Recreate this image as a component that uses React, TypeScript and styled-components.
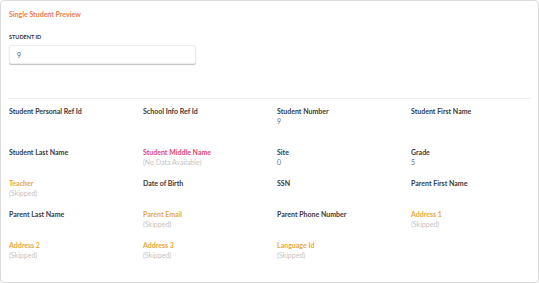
import React from 'react';
import styled, { createGlobalStyle } from 'styled-components';

type Status = 'normal' | 'missing' | 'skipped';

interface Field {
  label: string;
  value?: string;
  status?: Status;
}

const fields: Field[] = [
  { label: 'Student Personal Ref Id' },
  { label: 'School Info Ref Id' },
  { label: 'Student Number', value: '9' },
  { label: 'Student First Name' },
  { label: 'Student Last Name' },
  { label: 'Student Middle Name', value: '(No Data Available)', status: 'missing' },
  { label: 'Site', value: '0' },
  { label: 'Grade', value: '5' },
  { label: 'Teacher', value: '(Skipped)', status: 'skipped' },
  { label: 'Date of Birth' },
  { label: 'SSN' },
  { label: 'Parent First Name' },
  { label: 'Parent Last Name' },
  { label: 'Parent Email', value: '(Skipped)', status: 'skipped' },
  { label: 'Parent Phone Number' },
  { label: 'Address 1', value: '(Skipped)', status: 'skipped' },
  { label: 'Address 2', value: '(Skipped)', status: 'skipped' },
  { label: 'Address 3', value: '(Skipped)', status: 'skipped' },
  { label: 'Language Id', value: '(Skipped)', status: 'skipped' },
];

const labelColor: Record<Status, string> = {
  normal: '#3a3a3a',
  missing: '#e2456f',
  skipped: '#e8a83e',
};

const App = () => {
  return (
    <>
      <GlobalStyle />
      <Card>
        <Title>Single Student Preview</Title>
        <InputLabel>STUDENT ID</InputLabel>
        <IdInput defaultValue="9" readOnly />
        <Divider />
        <FieldGrid>
          {fields.map((f) => (
            <Cell key={f.label}>
              <Label $status={f.status || 'normal'}>{f.label}</Label>
              {f.value && <Value $status={f.status || 'normal'}>{f.value}</Value>}
            </Cell>
          ))}
        </FieldGrid>
      </Card>
    </>
  );
};

const GlobalStyle = createGlobalStyle`
  body {
    margin: 0;
    background: #fff;
    font-family: Lato, 'Liberation Sans', sans-serif;
  }
`;

const Card = styled.div`
  box-sizing: border-box;
  width: 539px;
  height: 283px;
  padding: 8px 8px 0 8px;
  border: 1px solid #dcdcdc;
  border-radius: 4px;
  box-shadow: 0 1px 2px rgba(0, 0, 0, 0.08);
`;

const Title = styled.div`
  color: #ea7a4c;
  font-size: 7px;
  font-weight: 700;
  line-height: 10px;
`;

const InputLabel = styled.div`
  margin-top: 15px;
  color: #333;
  font-size: 5.5px;
  font-weight: 700;
  line-height: 7px;
`;

const IdInput = styled.input`
  box-sizing: border-box;
  display: block;
  width: 187px;
  height: 19px;
  margin-top: 4px;
  padding: 0 7px;
  border: 1px solid #ececec;
  border-radius: 2px;
  box-shadow: 0 1px 1px rgba(0, 0, 0, 0.25);
  font-family: inherit;
  font-size: 7px;
  color: #555;
  outline: none;
`;

const Divider = styled.div`
  width: 522px;
  height: 1px;
  margin-top: 34px;
  background: #ececec;
`;

const FieldGrid = styled.div`
  display: grid;
  grid-template-columns: repeat(4, 134px);
  grid-template-rows: 41px;
  grid-auto-rows: 31px;
  margin-top: 8px;
`;

const Cell = styled.div`
  display: flex;
  flex-direction: column;
`;

const Label = styled.div<{ $status: Status }>`
  color: ${(p) => labelColor[p.$status]};
  font-size: 7px;
  font-weight: 700;
  line-height: 9px;
`;

const Value = styled.div<{ $status: Status }>`
  margin-top: 1px;
  color: ${(p) => (p.$status === 'normal' ? '#707070' : '#c4c4c4')};
  font-size: 7px;
  line-height: 9px;
`;

export default App;
